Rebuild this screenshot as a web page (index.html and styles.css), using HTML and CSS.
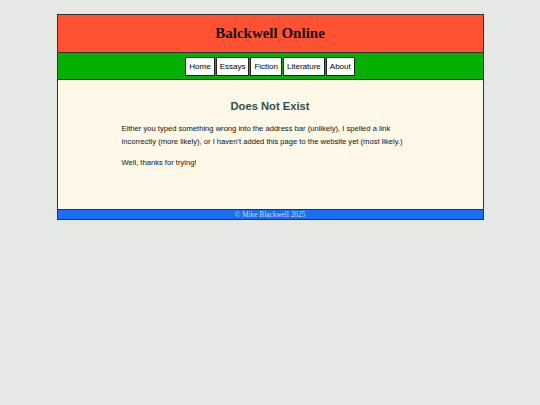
FILE: index.html
```html
<!DOCTYPE html>
<html>
<head>
<meta charset="utf-8">
<title>Balckwell Online</title>
<link rel="stylesheet" href="styles.css">
</head>
<body>
<div class="page">
  <header class="site-header"><h1 class="site-title">Balckwell Online</h1></header>
  <nav class="site-nav">
    <a class="nav-link" href="#">Home</a>
    <a class="nav-link" href="#">Essays</a>
    <a class="nav-link" href="#">Fiction</a>
    <a class="nav-link" href="#">Literature</a>
    <a class="nav-link" href="#">About</a>
  </nav>
  <main class="content">
    <h2 class="content-title">Does Not Exist</h2>
    <p class="content-text">Either you typed something wrong into the address bar (unlikely), I spelled a link incorrectly (more likely), or I haven't added this page to the website yet (most likely.)</p>
    <p class="content-text">Well, thanks for trying!</p>
  </main>
  <footer class="site-footer">© Mike Blackwell 2025</footer>
</div>
</body>
</html>
```

FILE: styles.css
```css
html, body {
  margin: 0;
  padding: 0;
  background: #e6e8e6;
}
.page {
  width: 425px;
  margin: 14px auto 0;
  border: 1px solid #333;
  display: flex;
  flex-direction: column;
}
.site-header {
  height: 37px;
  background: #ff5233;
  border-bottom: 1px solid #333;
  display: flex;
  align-items: center;
  justify-content: center;
}
.site-title {
  margin: 0;
  font-family: "Liberation Serif", "Times New Roman", serif;
  font-weight: bold;
  font-size: 15px;
  color: #1a0d08;
}
.site-nav {
  height: 26px;
  background: #05b003;
  border-bottom: 1px solid #333;
  display: flex;
  align-items: center;
  justify-content: center;
  gap: 1px;
}
.nav-link {
  height: 17px;
  padding: 0 3px;
  background: #fff;
  border: 1px solid #222;
  font-family: "Liberation Sans", Arial, sans-serif;
  font-size: 8px;
  line-height: 17px;
  color: #000;
  text-decoration: none;
}
.content {
  height: 129px;
  box-sizing: border-box;
  background: #fdf8e8;
  padding: 19px 64px 0;
}
.content-title {
  margin: 0 0 9px;
  text-align: center;
  font-family: "Liberation Sans", Arial, sans-serif;
  font-weight: bold;
  font-size: 11.2px;
  line-height: 14px;
  color: #2f4f4f;
}
.content-text {
  margin: 0 0 8px;
  font-family: "Liberation Sans", Arial, sans-serif;
  font-size: 7.6px;
  line-height: 13px;
  color: #111;
}
.site-footer {
  height: 9px;
  background: #1a6ef5;
  border-top: 1px solid #333;
  text-align: center;
  font-family: "Liberation Serif", "Times New Roman", serif;
  font-size: 7.3px;
  line-height: 9px;
  color: #d0dcf2;
}
```
